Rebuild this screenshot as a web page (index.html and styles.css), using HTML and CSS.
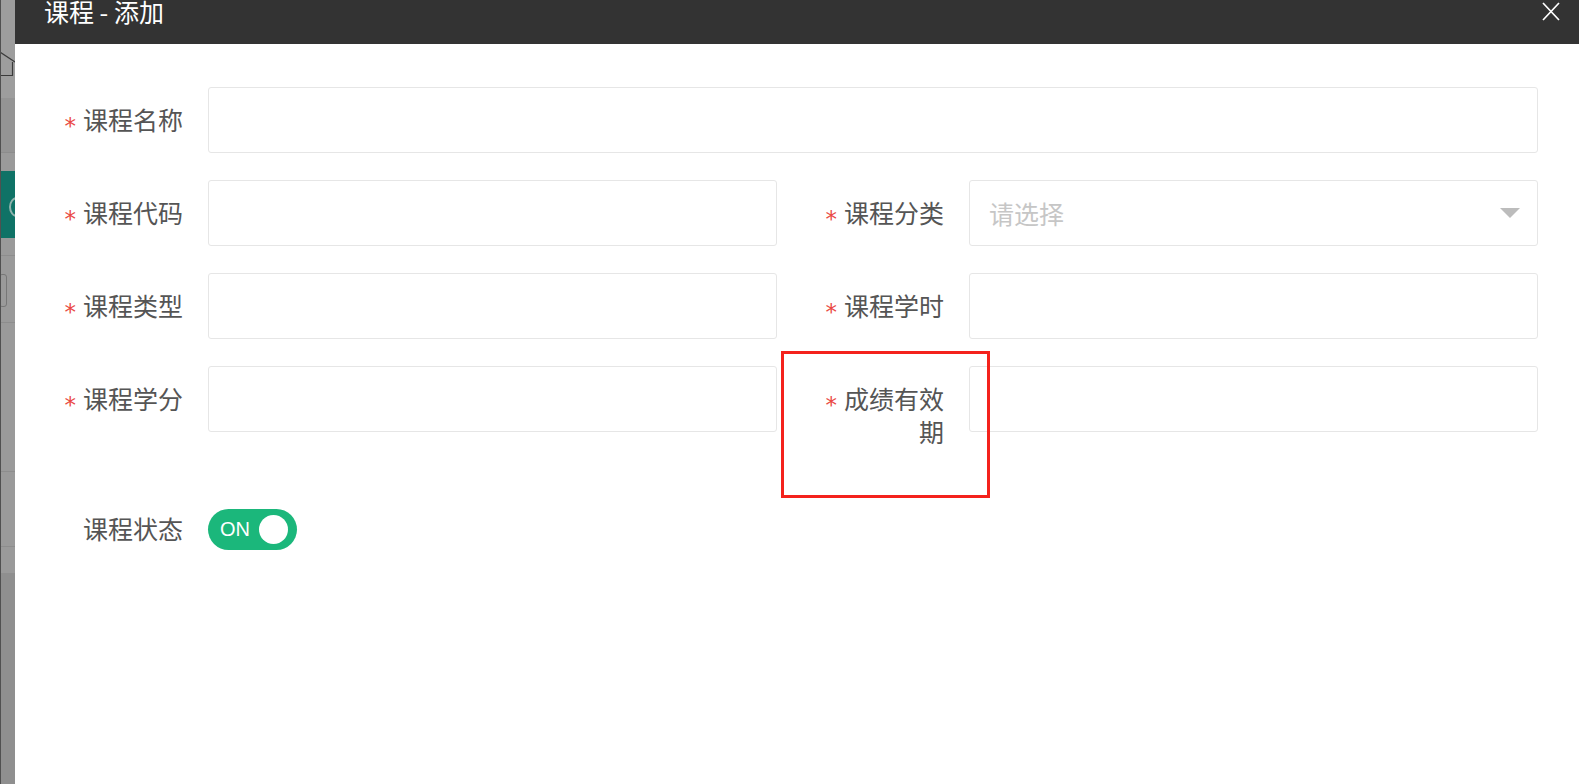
FILE: index.html
```html
<!DOCTYPE html>
<html lang="zh-CN">
<head>
<meta charset="utf-8">
<title>课程 - 添加</title>
<link rel="stylesheet" href="styles.css">
</head>
<body>
<div class="screen">
  <aside class="backdrop">
    <div class="bd-top">
      <svg class="bd-home" width="15" height="30" viewBox="0 0 15 30"><path d="M0 2 L15 12 M12.5 12 V25.5 H0" fill="none" stroke="#3a3a3a" stroke-width="1.2"/></svg>
    </div>
    <div class="bd-band"></div>
    <div class="bd-seg bd-s1"></div>
    <div class="bd-teal"><span class="bd-ring"></span></div>
    <div class="bd-seg bd-s2"></div>
    <div class="bd-seg bd-s3"><span class="bd-box"></span></div>
    <div class="bd-seg bd-s4"></div>
    <div class="bd-seg bd-s5"></div>
    <div class="bd-seg bd-s6"></div>
    <div class="bd-foot"></div>
  </aside>

  <section class="dialog">
    <header class="dlg-head">
      <h1 class="dlg-title">课程 - 添加</h1>
      <span class="dlg-close">
        <svg width="18" height="19" viewBox="0 0 18 19"><path d="M1 1 L17 18 M17 1 L1 18" stroke="#fff" stroke-width="1.7" fill="none"/></svg>
      </span>
    </header>

    <div class="dlg-body">
      <div class="field full">
        <div class="lbl"><span class="req">*</span>课程名称</div>
        <div class="inp"></div>
      </div>

      <div class="field">
        <div class="lbl"><span class="req">*</span>课程代码</div>
        <div class="inp"></div>
      </div>
      <div class="field">
        <div class="lbl"><span class="req">*</span>课程分类</div>
        <div class="inp sel"><span class="ph">请选择</span><span class="caret"></span></div>
      </div>

      <div class="field">
        <div class="lbl"><span class="req">*</span>课程类型</div>
        <div class="inp"></div>
      </div>
      <div class="field">
        <div class="lbl"><span class="req">*</span>课程学时</div>
        <div class="inp"></div>
      </div>

      <div class="field">
        <div class="lbl"><span class="req">*</span>课程学分</div>
        <div class="inp"></div>
      </div>
      <div class="field">
        <div class="lbl"><span class="req">*</span>成绩有效期</div>
        <div class="inp"></div>
      </div>

      <div class="field full status">
        <div class="lbl">课程状态</div>
        <div class="switch"><span class="sw-text">ON</span><span class="knob"></span></div>
      </div>
    </div>
  </section>

  <div class="annot"></div>
</div>
</body>
</html>
```

FILE: styles.css
```css
html, body {
  margin: 0;
  padding: 0;
  height: 784px;
  overflow: hidden;
  background: #fff;
}

.screen {
  position: relative;
  display: flex;
  height: 784px;
  font-family: "Noto Sans CJK SC", "Microsoft YaHei", sans-serif;
}

/* ---- dimmed page behind the dialog ---- */
.backdrop {
  width: 15px;
  flex: none;
  display: flex;
  flex-direction: column;
  border-left: 1px solid #505050;
  box-sizing: border-box;
  background: #9b9b9b;
  overflow: hidden;
}
.bd-top {
  height: 98px;
  background: #9d9d9d;
  padding-top: 50px;
  box-sizing: border-box;
}
.bd-home { display: block; margin-left: -1px; }
.bd-band {
  height: 54px;
  background: #949494;
  border-bottom: 1px solid #8c8c8c;
}
.bd-seg { background: #9a9a9a; border-bottom: 1px solid #8d8d8d; }
.bd-s1 { height: 18px; border-bottom: none; }
.bd-teal {
  height: 67px;
  background: #0f7266;
  display: flex;
  align-items: center;
}
.bd-ring {
  width: 16px;
  height: 20px;
  margin-left: 8px;
  border: 2px solid #8fb3ad;
  border-radius: 50%;
  box-sizing: border-box;
  margin-top: 4px;
  flex: none;
}
.bd-s2 { height: 17px; }
.bd-s3 {
  height: 67px;
  padding-top: 18px;
  box-sizing: border-box;
}
.bd-box {
  display: block;
  width: 6px;
  height: 31px;
  margin-left: -2px;
  border: 1px solid #777;
  border-radius: 3px;
}
.bd-s4 { height: 148px; }
.bd-s5 { height: 74px; }
.bd-s6 { height: 26px; border-bottom: none; }
.bd-foot { flex: 1; background: #8f8f8f; }

/* ---- dialog ---- */
.dialog {
  flex: 1;
  display: flex;
  flex-direction: column;
  background: #fff;
}
.dlg-head {
  height: 44px;
  flex: none;
  background: #333;
  display: flex;
  justify-content: space-between;
  align-items: flex-start;
  padding: 0 19px 0 29px;
}
.dlg-title {
  margin: -1px 0 0;
  font-size: 25px;
  line-height: 25px;
  font-weight: normal;
  color: #fff;
}
.dlg-close {
  display: block;
  margin-top: 2px;
}
.dlg-close svg { display: block; }

.dlg-body {
  display: grid;
  grid-template-columns: 1fr 1fr;
  column-gap: 31px;
  row-gap: 27px;
  padding: 43px 41px 0 32px;
  align-items: start;
}
.field {
  display: flex;
  align-items: flex-start;
  gap: 25px;
}
.full { grid-column: 1 / span 2; }

.lbl {
  width: 136px;
  flex: none;
  text-align: right;
  font-size: 25px;
  line-height: 33px;
  padding: 16px 0 17px;
  color: #555;
}
.req {
  font-family: "DejaVu Sans", sans-serif;
  font-size: 23px;
  line-height: 0;
  color: #ea4a45;
  margin-right: 7px;
  vertical-align: -4px;
}

.inp {
  flex: 1;
  height: 66px;
  box-sizing: border-box;
  border: 1px solid #e6e6e6;
  border-radius: 3px;
  background: #fff;
}
.sel {
  display: flex;
  align-items: center;
  justify-content: space-between;
  padding: 0 17px 0 19px;
}
.ph {
  font-size: 25px;
  color: #c6c6c6;
  line-height: 34px;
}
.caret {
  width: 0;
  height: 0;
  border-left: 10.5px solid transparent;
  border-right: 10.5px solid transparent;
  border-top: 10px solid #bcbcbc;
}

.status {
  align-items: center;
  margin-top: 4px;
}
.switch {
  width: 89px;
  height: 41px;
  box-sizing: border-box;
  border-radius: 21px;
  background: #1bb77b;
  display: flex;
  align-items: center;
  justify-content: space-between;
  padding: 0 9px 0 12px;
}
.sw-text {
  font-family: "Liberation Sans", Arial, sans-serif;
  font-size: 20px;
  color: #fff;
  line-height: 20px;
}
.knob {
  width: 29px;
  height: 29px;
  border-radius: 50%;
  background: #fff;
}

/* annotation rectangle drawn over the screenshot */
.annot {
  position: absolute;
  left: 781px;
  top: 351px;
  width: 209px;
  height: 147px;
  box-sizing: border-box;
  border: 3px solid #f4221c;
}
```
